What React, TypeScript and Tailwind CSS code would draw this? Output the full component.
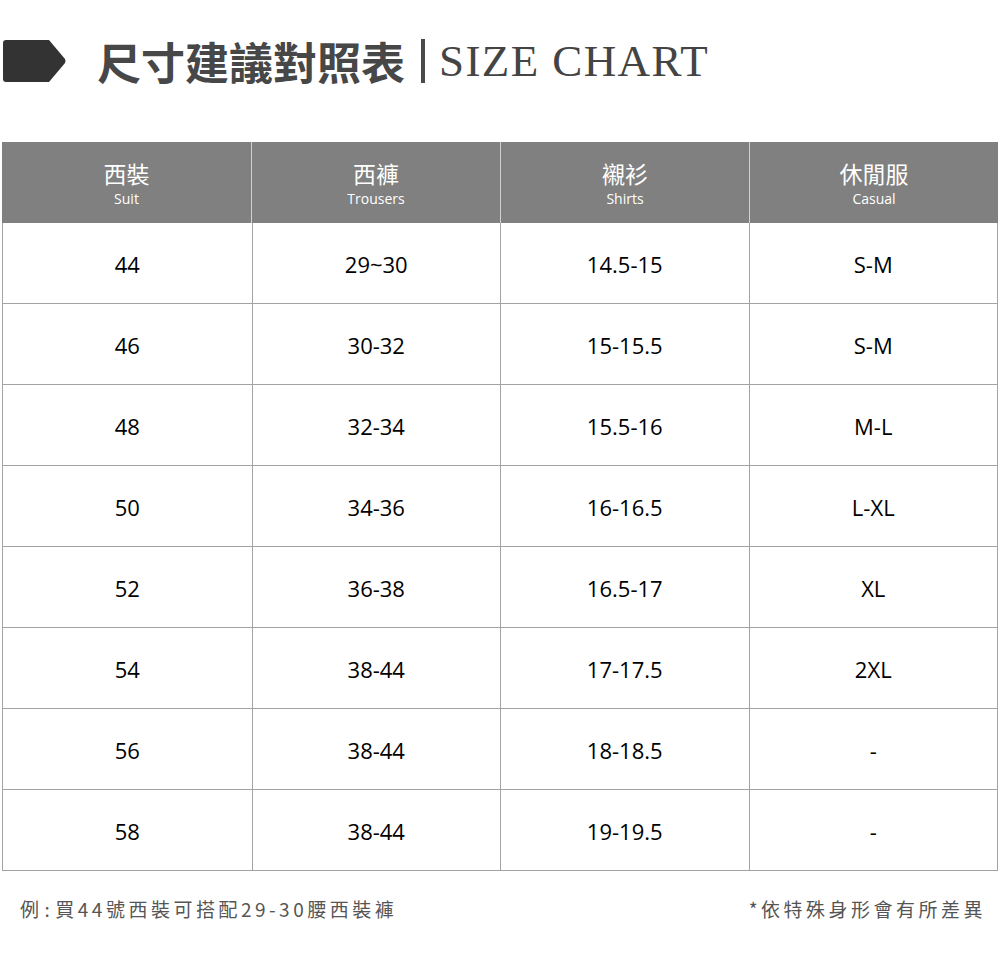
const heads = [
  { zh: "西裝", en: "Suit" },
  { zh: "西褲", en: "Trousers" },
  { zh: "襯衫", en: "Shirts" },
  { zh: "休閒服", en: "Casual" },
];

const rows = [
  ["44", "29~30", "14.5-15", "S-M"],
  ["46", "30-32", "15-15.5", "S-M"],
  ["48", "32-34", "15.5-16", "M-L"],
  ["50", "34-36", "16-16.5", "L-XL"],
  ["52", "36-38", "16.5-17", "XL"],
  ["54", "38-44", "17-17.5", "2XL"],
  ["56", "38-44", "18-18.5", "-"],
  ["58", "38-44", "19-19.5", "-"],
];

const sans = "font-['Open_Sans','Noto_Sans_CJK_TC',sans-serif]";

export default function App() {
  return (
    <div className={`w-[1000px] h-[958px] bg-white ${sans}`}>
      {/* title */}
      <div className="flex items-center h-[120px] pl-[3px] pt-[2px]">
        <svg width="63" height="42" viewBox="0 0 63 42" className="shrink-0">
          <path
            d="M3 0 H46 L62 19 Q63 21 62 23 L46 42 H3 Q0 42 0 39 V3 Q0 0 3 0 Z"
            fill="#333333"
          />
        </svg>
        <div className="ml-[31px] text-[44px] leading-none font-bold text-[#474747] font-['Noto_Sans_CJK_TC',sans-serif]">
          尺寸建議對照表
        </div>
        <div className="ml-[16px] w-[4px] h-[44px] bg-[#4a4a4a]" />
        <div className="ml-[14px] text-[45px] leading-none text-[#444] tracking-[1.4px] font-['Liberation_Serif',serif]">
          SIZE CHART
        </div>
      </div>

      {/* table */}
      <div className="ml-[2px] mt-[22px] w-[996px]">
        <div className="grid grid-cols-4 h-[81px] bg-[#808080] text-white">
          {heads.map((h, i) => (
            <div
              key={h.en}
              className={`flex flex-col items-center justify-center ${i > 0 ? "border-l border-[#d0d0d0]" : ""}`}
            >
              <div className="text-[23px] leading-[28px] pt-[2px]">{h.zh}</div>
              <div className="text-[14px] leading-[18px] mt-[2px]">{h.en}</div>
            </div>
          ))}
        </div>
        <div className="border-l border-r border-[#a3a3a3]">
          {rows.map((r, ri) => (
            <div key={ri} className="grid grid-cols-4 h-[81px] border-b border-[#a3a3a3]">
              {r.map((c, ci) => (
                <div
                  key={ci}
                  className={`flex items-center justify-center pt-[2px] text-[22px] text-black ${ci > 0 ? "border-l border-[#a3a3a3]" : ""}`}
                >
                  {c}
                </div>
              ))}
            </div>
          ))}
        </div>
      </div>

      {/* footnotes */}
      <div className="flex justify-between items-center mt-[24px] pl-[20px] pr-[14px] text-[19px] text-[#555] tracking-[3.5px] font-['Noto_Sans_CJK_TC',sans-serif]">
        <div>
          例<span className="mx-[2px]">:</span>買44號西裝可搭配29-30腰西裝褲
        </div>
        <div>*依特殊身形會有所差異</div>
      </div>
    </div>
  );
}
